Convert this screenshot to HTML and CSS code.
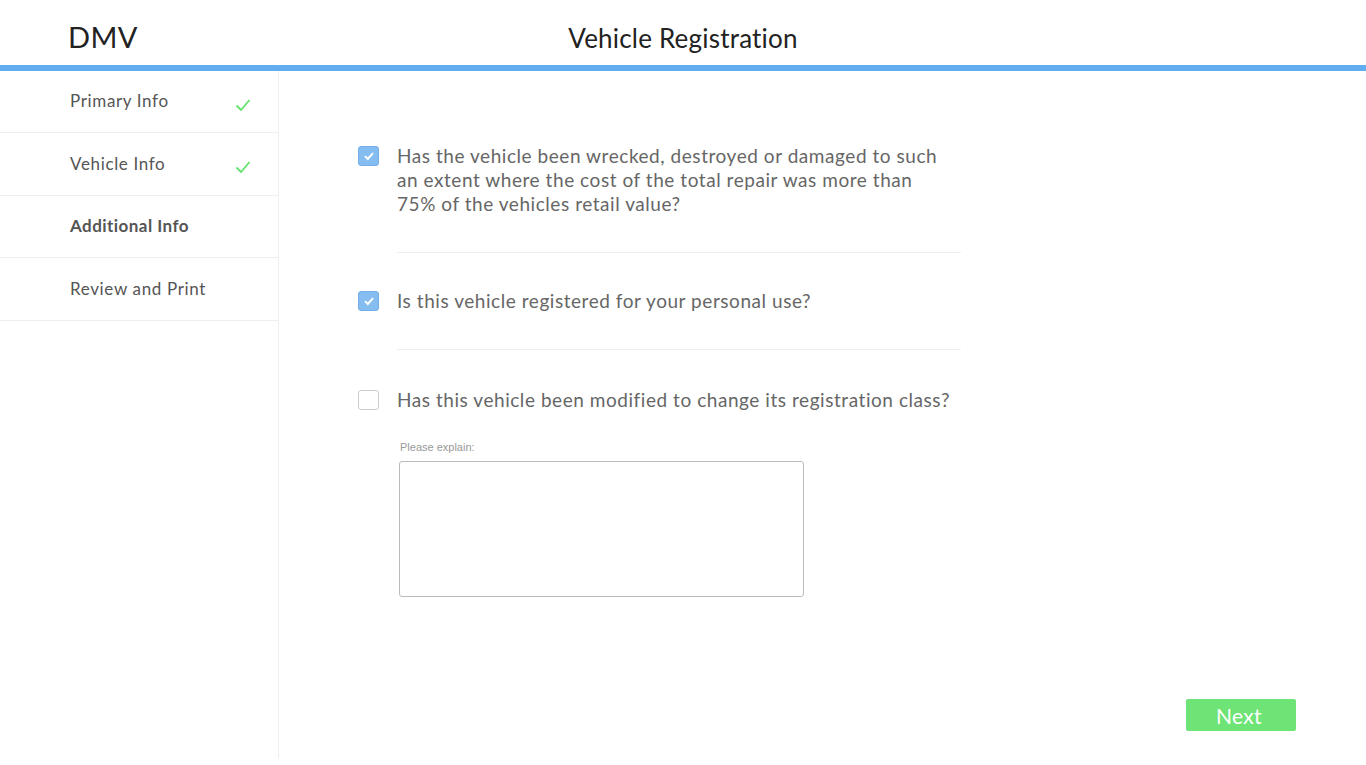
FILE: index.html
```html
<!DOCTYPE html>
<html>
<head>
<meta charset="utf-8">
<link rel="stylesheet" href="styles.css">
</head>
<body>
<header class="topbar">
  <div class="logo">DMV</div>
  <h1 class="title">Vehicle Registration</h1>
</header>
<div class="layout">
  <nav class="sidebar">
    <div class="nav-item"><span>Primary Info</span><svg class="check" width="16" height="14" viewBox="0 0 16 14"><path d="M1.5 7.5 L6 12 L14.5 2" fill="none" stroke="#62e26c" stroke-width="1.8"/></svg></div>
    <div class="nav-item"><span>Vehicle Info</span><svg class="check" width="16" height="14" viewBox="0 0 16 14"><path d="M1.5 7.5 L6 12 L14.5 2" fill="none" stroke="#62e26c" stroke-width="1.8"/></svg></div>
    <div class="nav-item active"><span>Additional Info</span></div>
    <div class="nav-item"><span>Review and Print</span></div>
  </nav>
  <main class="content">
    <div class="questions">
      <div class="question">
        <span class="box checked"><svg width="12" height="10" viewBox="0 0 12 10"><path d="M2 5.2 L4.8 8 L10 2.2" fill="none" stroke="#fff" stroke-width="1.9"/></svg></span>
        <div class="q-body">
          <p class="q-text">Has the vehicle been wrecked, destroyed or damaged to such an extent where the cost of the total repair was more than 75% of the vehicles retail value?</p>
        </div>
      </div>
      <div class="question">
        <span class="box checked"><svg width="12" height="10" viewBox="0 0 12 10"><path d="M2 5.2 L4.8 8 L10 2.2" fill="none" stroke="#fff" stroke-width="1.9"/></svg></span>
        <div class="q-body">
          <p class="q-text">Is this vehicle registered for your personal use?</p>
        </div>
      </div>
      <div class="question third">
        <span class="box"></span>
        <div class="q-body last">
          <p class="q-text">Has this vehicle been modified to change its registration class?</p>
          <label class="explain-label">Please explain:</label>
          <textarea class="explain"></textarea>
        </div>
      </div>
    </div>
    <div class="actions">
      <button class="next">Next</button>
    </div>
  </main>
</div>
</body>
</html>
```
FILE: styles.css
```css
* { box-sizing: border-box; }
html, body { margin: 0; padding: 0; height: 100%; }
body {
  font-family: Lato, "Open Sans", sans-serif;
  background: #fff;
  color: #555;
  display: flex;
  flex-direction: column;
  height: 765px;
  overflow: hidden;
}
.topbar {
  height: 71px;
  border-bottom: 6px solid #62acf0;
  display: flex;
  align-items: center;
  position: relative;
  padding-left: 68px;
  flex: none;
}
.logo {
  font-size: 29px;
  color: #222;
  letter-spacing: 0.4px;
  padding-top: 8px;
}
.title {
  position: absolute;
  left: 0;
  right: 0;
  top: 22px;
  margin: 0;
  text-align: center;
  font-size: 26px;
  font-weight: 400;
  color: #222;
  letter-spacing: 0.2px;
}
.layout {
  flex: 1;
  display: flex;
  min-height: 0;
}
.sidebar {
  width: 279px;
  flex: none;
  border-right: 1px solid #eee;
  margin-bottom: 7px;
}
.nav-item {
  height: 62px;
  border-bottom: 1px solid #eee;
  display: flex;
  align-items: center;
  justify-content: space-between;
  padding: 0 27px 2px 70px;
  font-size: 17px;
  letter-spacing: 0.65px;
  color: #555;
}
.nav-item:nth-child(even) { height: 63px; }
.nav-item.active { font-weight: 700; letter-spacing: 0.45px; }
.check { margin-top: 8px; }
.content {
  flex: 1;
  display: flex;
  flex-direction: column;
  padding: 73px 70px 34px 79px;
}
.question {
  display: flex;
  gap: 18px;
}
.question + .question { padding-top: 36px; }
.question.third { padding-top: 38px; }
.box {
  width: 21px;
  height: 20px;
  flex: none;
  border: 1px solid #ccc;
  border-radius: 3px;
  margin-top: 2px;
  display: flex;
  align-items: center;
  justify-content: center;
  background: #fff;
}
.box.checked {
  background: #85bdf1;
  border-color: #73aee8;
}
.q-body {
  width: 564px;
  padding-bottom: 36px;
  border-bottom: 1px solid #eee;
}
.q-body.last { border-bottom: none; padding-bottom: 0; }
.q-text {
  margin: 0;
  max-width: 552px;
  font-size: 19px;
  line-height: 24px;
  letter-spacing: 0.55px;
  color: #666;
}
.q-body.last .q-text { max-width: none; }
.explain-label {
  display: block;
  margin: 28px 0 0 3px;
  font-family: "Liberation Sans", Arial, sans-serif;
  font-size: 11px;
  color: #999;
  line-height: 14px;
}
.explain {
  display: block;
  margin: 7px 0 0 2px;
  width: 405px;
  height: 136px;
  border: 1px solid #bbb;
  border-radius: 3px;
  resize: none;
  font-family: inherit;
}
.actions {
  margin-top: auto;
  display: flex;
  justify-content: flex-end;
}
.next {
  width: 110px;
  height: 32px;
  border: none;
  border-radius: 2px;
  background: #6fe476;
  color: #fff;
  font-family: Lato, sans-serif;
  font-size: 21px;
  letter-spacing: 0.3px;
  padding: 0 4px 0 0;
  cursor: pointer;
}
```
